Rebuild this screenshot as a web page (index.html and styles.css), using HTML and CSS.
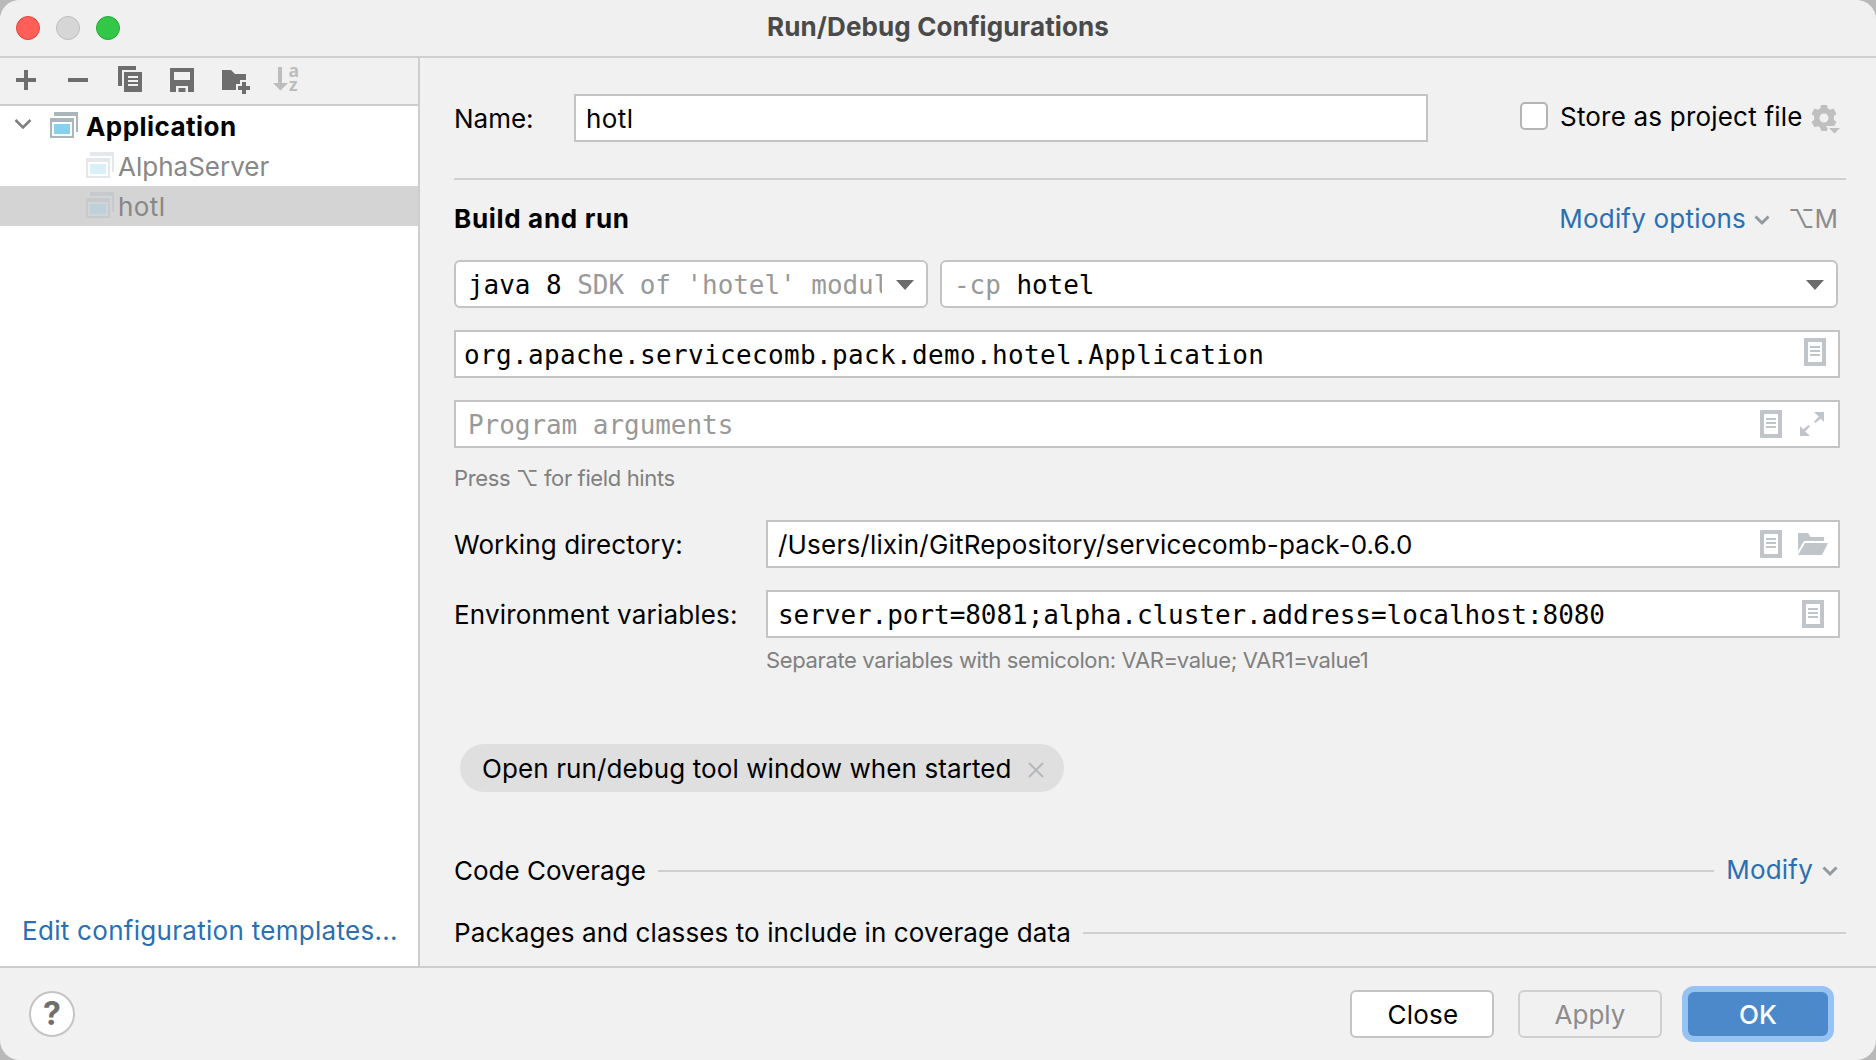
FILE: index.html
```html
<!DOCTYPE html>
<html lang="en">
<head>
<meta charset="utf-8">
<title>Run/Debug Configurations</title>
<link rel="stylesheet" href="styles.css">
</head>
<body>
<svg class="defs" width="0" height="0" aria-hidden="true">
  <symbol id="app" viewBox="0 0 28 26"><path class="frame" d="M4 0h24v20h-2V4H4z"/><path class="frame" fill-rule="evenodd" d="M0 6h24v20H0zM2 10v14h20V10z"/><path class="screen" d="M4 12h16v10H4z"/></symbol>
  <symbol id="doc" viewBox="0 0 22 28"><path fill-rule="evenodd" d="M0 0h22v28H0zM4 4v20h14V4zM6 8h10v2H6zM6 12h10v2H6zM6 16h10v2H6z"/></symbol>
  <symbol id="chevron" viewBox="0 0 16 12"><path d="M1.500 2.500 8 9l6.500-6.500" fill="none" stroke="currentColor" stroke-width="3"/></symbol>
  <symbol id="arrow" viewBox="0 0 18 10"><path d="M0 0h18L9 10z"/></symbol>
</svg>
<div class="window">
  <header class="titlebar">
    <div class="lights"><i class="red"></i><i class="gray"></i><i class="green"></i></div>
    <h1>Run/Debug Configurations</h1>
  </header>
  <div class="body">
    <aside class="sidebar">
      <div class="toolbar">
        <svg width="20" height="20" viewBox="0 0 20 20"><path d="M8 0h4v8h8v4h-8v8H8v-8H0V8h8z"/></svg>
        <svg width="20" height="20" viewBox="0 0 20 20"><path d="M0 8h20v4H0z"/></svg>
        <svg class="copy" width="24" height="26" viewBox="0 0 24 26"><path d="M0 0h18v4H4v16H0z"/><path fill-rule="evenodd" d="M6 6h18v20H6zM10 10v2h10v-2zM10 14v2h10v-2zM10 18v2h10v-2z"/></svg>
        <svg class="save" width="24" height="24" viewBox="0 0 24 24"><path fill-rule="evenodd" d="M0 0h24v24h-6v-6H6v6H0zM4 4v8h16V4z"/><path d="M8.500 20h7v4h-7z"/></svg>
        <svg class="folder" width="28" height="24" viewBox="0 0 28 24"><path d="M0 0h9l4 4h11v16H0z"/><path class="halo" d="M18 10h8v4h4v8h-4v4h-8v-4h-4v-8h4z"/><path d="M20 12h4v4h4v4h-4v4h-4v-4h-4v-4h4z"/></svg>
        <svg class="sort" width="26" height="26" viewBox="0 0 26 26"><path d="M5 1h4v16h6L7.500 24.500 0 17h5z"/><text x="15.500" y="11">a</text><text x="16" y="25">z</text></svg>
      </div>
      <div class="tree">
        <div class="row root"><svg class="twist" width="18" height="12" viewBox="0 0 18 12"><path d="M1.500 2 9 9.500 16.500 2"/></svg><svg class="appicon" width="28" height="26"><use href="#app"/></svg><b>Application</b></div>
        <div class="row child"><svg class="appicon" width="28" height="26"><use href="#app"/></svg><span>AlphaServer</span></div>
        <div class="row child selected"><svg class="appicon" width="28" height="26"><use href="#app"/></svg><span class="ls4">hotl</span></div>
      </div>
      <a class="link templates">Edit configuration templates...</a>
    </aside>
    <main class="form">
      <div class="name-row">
        <label>Name:</label>
        <div class="field name"><span class="ls4">hotl</span></div>
        <div class="store"><i class="checkbox"></i><span>Store as project file</span>
          <svg class="gear" width="28" height="30" viewBox="0 0 28 30"><path fill-rule="evenodd" d="M9 1h6l.8 3.600 2.200 1.200 3.500-1.200 3 5.200L21.800 12.300v3.400l2.700 2.400-3 5.200L18 22.200l-2.200 1.200L15 27H9l-.8-3.600L6 22.200l-3.500 1.100-3-5.200L2.200 15.700v-3.400L-.5 9.800l3-5.200L6 5.800l2.200-1.200zM12 9.500a4.500 4.500 0 1 0 0 9 4.500 4.500 0 0 0 0-9z"/><path class="halo" d="M14 22h14v8H20z"/><path d="M17 24h11l-5.500 5.500z"/></svg>
        </div>
      </div>
      <hr>
      <div class="section">
        <h2>Build and run</h2>
        <a class="link">Modify options</a>
        <svg class="chev" width="16" height="12"><use href="#chevron"/></svg>
        <span class="shortcut">⌥M</span>
      </div>
      <div class="combos">
        <div class="combo jre mono"><span class="clip">java 8 <em>SDK of 'hotel' modul</em></span><svg width="18" height="10"><use href="#arrow"/></svg></div>
        <div class="combo cp mono"><span><em>-cp</em> hotel</span><svg width="18" height="10"><use href="#arrow"/></svg></div>
      </div>
      <div class="field mono main-class"><span>org.apache.servicecomb.pack.demo.hotel.Application</span><svg class="doc" width="22" height="28"><use href="#doc"/></svg></div>
      <div class="field mono args"><em>Program arguments</em><svg class="doc" width="22" height="28"><use href="#doc"/></svg>
        <svg class="expand" width="24" height="24" viewBox="0 0 24 24"><path d="M14 0h10v10l-3.300-3.300-5.200 4.300-1.500-1.500 4.800-4.700zM10 24H0V14l3.300 3.300 5.200-4.300 1.500 1.500-4.800 4.700z"/></svg></div>
      <p class="hint press">Press ⌥ for field hints</p>
      <div class="pair">
        <label class="working">Working directory:</label>
        <div class="field dir"><span>/Users/lixin/GitRepository/servicecomb-pack-0.6.0</span><svg class="doc" width="22" height="28"><use href="#doc"/></svg>
          <svg class="open" width="30" height="22" viewBox="0 0 30 22"><path d="M0 0h10l2.500 4H26v4H6L0 18z"/><path d="M7 10h23l-6 12H0z"/></svg></div>
      </div>
      <div class="pair env">
        <label>Environment variables:</label>
        <div class="field mono vars"><span>server.port=8081;alpha.cluster.address=localhost:8080</span><svg class="doc" width="22" height="28"><use href="#doc"/></svg></div>
      </div>
      <p class="hint vars-hint">Separate variables with semicolon: VAR=value; VAR1=value1</p>
      <div class="chip"><span>Open run/debug tool window when started</span><svg width="16" height="16" viewBox="0 0 16 16"><path d="M1 1l14 14M15 1 1 15"/></svg></div>
      <div class="ruled coverage"><span>Code Coverage</span><i></i><a class="link">Modify</a><svg class="chev" width="16" height="12"><use href="#chevron"/></svg></div>
      <div class="ruled packages"><span>Packages and classes to include in coverage data</span><i></i></div>
    </main>
  </div>
  <footer class="footer">
    <button class="help">?</button>
    <button class="btn close">Close</button>
    <button class="btn disabled">Apply</button>
    <button class="btn primary">OK</button>
  </footer>
</div>
</body>
</html>
```
FILE: styles.css
```css
* { box-sizing: border-box; }
body {
  margin: 0;
  background: #b9b9b9;
  color: #000;
  font: 26px/40px Inter, "Liberation Sans", sans-serif;
  overflow: hidden;
}
h1, h2, p { margin: 0; font-size: inherit; }
em { font-style: normal; color: #999; }
svg { display: block; flex: none; fill: currentColor; overflow: visible; }
.defs { position: absolute; }
.window {
  width: 1876px;
  height: 1060px;
  display: flex;
  flex-direction: column;
  background: #f1f1f1;
  border-radius: 20px;
  overflow: hidden;
  white-space: nowrap;
}

/* Title bar */
.titlebar {
  height: 58px;
  flex: none;
  display: grid;
  grid-template-columns: 1fr auto 1fr;
  background: #f0f0f0;
  border-bottom: 2px solid #cfcfcf;
}
.titlebar h1 { color: #4a4a4a; line-height: 54px; font-weight: 700; letter-spacing: .12px; }
.lights { display: flex; gap: 16px; padding: 16px 0 0 16px; }
.lights i { width: 24px; height: 24px; border-radius: 50%; border: 1px solid; }
.lights .red { background: #ff5f57; border-color: #e2463f; }
.lights .gray { background: #d6d6d6; border-color: #bdbdbd; }
.lights .green { background: #33c748; border-color: #24a936; }

.body { flex: none; height: 908px; display: flex; }

/* Sidebar */
.sidebar {
  width: 420px;
  flex: none;
  display: flex;
  flex-direction: column;
  background: #fff;
  border-right: 2px solid #cdcdcd;
}
.toolbar {
  height: 48px;
  flex: none;
  display: flex;
  align-items: center;
  padding: 0 0 2px 16px;
  gap: 32px;
  background: #f1f1f1;
  border-bottom: 2px solid #cdcdcd;
  color: #6e6e6e;
}
.toolbar .copy { margin: -2px 0 0 -2px; }
.toolbar .save { margin-left: -4px; }
.toolbar .folder { margin: 4px 0 0 -4px; }
.toolbar .sort { color: #bdbdbd; margin: -2px 0 0 -9px; }
.sort text { font: 700 17.5px "Open Sans", sans-serif; }
.row { height: 40px; display: flex; align-items: center; }
.row > b, .row > span { padding-top: 2px; }
.frame { fill: #aab5bc; }
.screen { fill: #87d0ee; }
.twist { margin: 0 18px 4px 14px; fill: none; stroke: #7f7f7f; stroke-width: 2.500; }
.root b { margin-left: 8px; letter-spacing: .45px; }
.root .appicon { margin-bottom: 2px; }
.child { padding-left: 86px; color: #878787; }
.child .appicon { opacity: .3; margin: 0 4px 2px 0; }
.ls4 { letter-spacing: .4px; }
.selected { background: #d4d4d4; }
.link { color: #2b6fb1; letter-spacing: .2px; }
.templates { margin: auto 0 15px 22px; letter-spacing: .29px; }

/* Form */
.form { flex: 1; padding: 36px 30px 0 34px; display: flex; flex-direction: column; }
.name-row { display: flex; height: 48px; align-items: center; }
.field {
  height: 48px;
  flex: none;
  display: flex;
  align-items: center;
  background: #fff;
  border: 2px solid #c4c4c4;
  padding-left: 10px;
}
.name-row label { width: 120px; padding-top: 2px; }
.name { width: 854px; }
.field > span { padding-top: 2px; }
.store { display: flex; align-items: center; margin-left: 92px; height: 44px; align-self: flex-start; }
.store span { padding-top: 2px; letter-spacing: .2px; }
.checkbox { width: 28px; height: 28px; border: 2px solid #b4b4b4; border-radius: 5px; background: #fff; margin-right: 12px; }
.gear { color: #bfbfbf; margin: 6px 0 0 9px; }
.halo { fill: #f1f1f1; }
hr { width: 100%; height: 2px; border: 0; margin: 36px 0 0; background: #cfcfcf; flex: none; }
.section { display: flex; align-items: center; height: 40px; margin-top: 19px; }
.section h2 { margin-right: auto; letter-spacing: .68px; }
.chev { color: #929a9f; }
.section .chev { margin: 2px 18px 0 8px; }
.shortcut { color: #8c8c8c; margin-right: 8px; }
.combos { display: flex; gap: 12px; margin-top: 21px; }
.combo {
  height: 48px;
  display: flex;
  align-items: center;
  justify-content: space-between;
  border: 2px solid #c4c4c4;
  border-radius: 6px;
  background: #fff;
  padding: 0 12px;
}
.combo svg { color: #6b6b6b; margin-top: 2px; }
.jre { width: 474px; }
.cp { width: 898px; }
.clip { width: 414px; overflow: hidden; }
.mono { font-family: "DejaVu Sans Mono", monospace; letter-spacing: -.05px; }
.mono > span, .mono > em { padding-top: 2px; }
.doc, .expand, .open { color: #c0c5c9; }
.field .doc { margin-left: auto; }
.main-class { width: 1386px; margin-top: 22px; padding-left: 8px; letter-spacing: .35px; }
.main-class .doc { margin-right: 12px; margin-bottom: 4px; }
.args { width: 1386px; margin-top: 22px; padding-left: 12px; }
.args .doc { margin-right: 18px; }
.expand { margin-right: 14px; }
.hint { font-size: 22px; color: #808080; line-height: 30px; letter-spacing: -.37px; }
.press { margin: 15px 0 27px; }
.pair { display: flex; height: 48px; flex: none; }
.pair label { width: 312px; line-height: 50px; letter-spacing: .18px; }
.pair .working { letter-spacing: .11px; }
.pair .field { width: 1074px; }
.dir span { letter-spacing: .2px; }
.dir .doc { margin-right: 16px; }
.open { margin-right: 10px; }
.env { margin-top: 22px; }
.vars .doc { margin-right: 14px; }
.vars-hint { margin: 7px 0 0 312px; }
.chip {
  width: 604px;
  height: 48px;
  flex: none;
  margin: 69px 0 0 6px;
  padding: 0 20px 0 22px;
  border-radius: 24px;
  background: #dfdfdf;
  display: flex;
  align-items: center;
  justify-content: space-between;
  letter-spacing: .1px;
}
.chip span { padding-top: 2px; }
.chip svg { stroke: #b4b8bb; stroke-width: 2; margin-top: 4px; }
.ruled { display: flex; align-items: center; height: 40px; }
.ruled i { flex: 1; height: 2px; background: #cfcfcf; margin-left: 12px; }
.coverage { margin-top: 59px; }
.coverage .link { margin: -3px 9px 0 12px; }
.coverage .chev { margin-right: 8px; }
.packages { margin-top: 22px; letter-spacing: .1px; }

/* Footer */
.footer {
  flex: 1;
  display: flex;
  align-items: flex-start;
  border-top: 2px solid #cdcdcd;
  padding: 22px 48px 0 29px;
}
button { font: inherit; color: inherit; padding: 0; }
.help {
  width: 46px;
  height: 46px;
  margin: 1px auto 0 0;
  border: 2px solid #c4c4c4;
  border-radius: 50%;
  background: #fff;
  color: #6e6e6e;
  font-size: 32px;
  font-weight: 700;
  line-height: 42px;
}
.btn {
  width: 144px;
  height: 48px;
  border: 2px solid #c4c4c4;
  border-radius: 6px;
  background: #fff;
  margin-right: 24px;
  padding-top: 2px;
  line-height: 42px;
}
.close { letter-spacing: .25px; padding-left: 2px; }
.disabled { color: #8c8c8c; background: #f1f1f1; border-color: #cfcfcf; }
.primary {
  width: 140px;
  height: 44px;
  margin: 2px 0 0 2px;
  border: 0;
  background: #4c89ca;
  color: #fff;
  font-weight: 500;
  box-shadow: 0 0 0 6px #97c3f3;
}
```
